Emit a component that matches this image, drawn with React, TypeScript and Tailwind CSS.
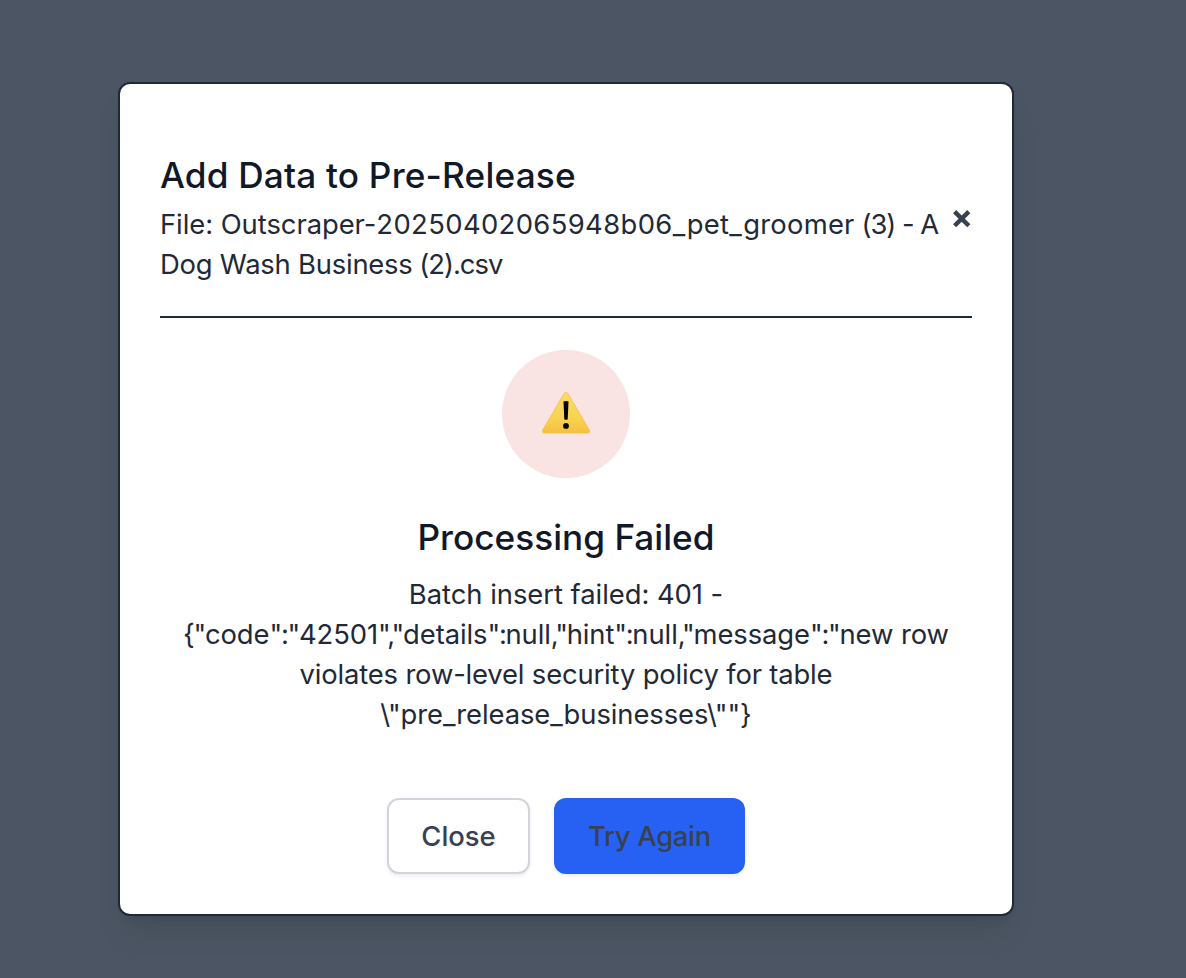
function WarningIcon() {
  return (
    <svg className="mb-[3px]" width="50" height="44" viewBox="0 0 50 44" aria-hidden="true">
      <defs>
        <linearGradient id="warn" x1="0" y1="0" x2="0" y2="1">
          <stop offset="0" stopColor="#fadb62" />
          <stop offset="0.6" stopColor="#f9d453" />
          <stop offset="1" stopColor="#f4c142" />
        </linearGradient>
      </defs>
      <path
        d="M23.4 2.1Q25 -0.2 26.6 2.1L48.4 39.1Q49.6 41.9 46.8 42H3.2Q0.4 41.9 1.6 39.1Z"
        fill="url(#warn)"
        stroke="#f2c14b"
        strokeWidth="0.8"
      />
      <path d="M22.5 10.5Q25 9.6 27.5 10.5L26.7 28.2Q25 29.2 23.3 28.2Z" fill="#000" />
      <circle cx="25" cy="34.9" r="2.9" fill="#000" />
    </svg>
  );
}

// Sets JSON punctuation slightly tighter than the words around it.
function JsonText({ text }: { text: string }) {
  return (
    <>
      {text.split(/([{}":,]+)/).map((part, i) => (
        <span key={i} className={i % 2 === 1 ? "tracking-[-1.3px]" : "tracking-[-0.08px]"}>
          {part}
        </span>
      ))}
    </>
  );
}

export default function App() {
  return (
    <div className="h-[978px] w-[1186px] overflow-hidden bg-[#4c5563] pt-[82px] pl-[118px] font-['Inter','Liberation_Sans',sans-serif]">
      <div className="h-[834px] w-[896px] rounded-xl border-2 border-[#1f2937] bg-white px-10 pt-[63px] pb-10 shadow-[0_20px_30px_-6px_rgba(0,0,0,0.1),0_8px_12px_-8px_rgba(0,0,0,0.1)]">
        <div className="flex items-center justify-between border-b-2 border-[#1f2937] pb-8">
          <div className="whitespace-nowrap">
            <h3 className="mb-px text-[35.2px] leading-[56px] font-medium tracking-[0.18px] text-[#111827]">
              Add Data to Pre-Release
            </h3>
            <p className="text-[27.4px] leading-10 text-[#1f2937]">
              <span className="block">
                <span className="tracking-[-0.05px]">File: Outscraper-</span>
                <span className="tracking-[0.38px]">20250402065948b06</span>
                <span className="tracking-[1.5px]">_</span>
                <span className="tracking-[0.25px]">pet</span>
                <span className="tracking-[1.5px]">_</span>
                <span className="tracking-[0.25px]">groomer</span>
                <span className="tracking-[-1px]"> (3) - A</span>
              </span>
              <span className="block">
                <span className="tracking-[-0.22px]">Dog Wash Business</span>
                <span className="tracking-[-1px]"> (2).csv</span>
              </span>
            </p>
          </div>
          <button className="mt-[7px] shrink-0" aria-label="Dismiss">
            <svg width="20" height="20" viewBox="0 0 20 20" fill="none" stroke="#374151" strokeWidth="4.4">
              <path d="M2.6 2.6L16.8 16.8M16.8 2.6L2.6 16.8" />
            </svg>
          </button>
        </div>
        <div className="flex flex-col items-center pt-8 text-center whitespace-nowrap">
          <div className="flex size-32 items-center justify-center rounded-full bg-[#f9e3e3]">
            <WarningIcon />
          </div>
          <h3 className="mt-[31px] text-[35.2px] leading-[56px] font-medium text-[#111827]">
            Processing Failed
          </h3>
          <p className="mt-[9px] text-[27.4px] leading-10 text-[#1f2937]">
            <span className="block tracking-[-0.04px]">Batch insert failed: 401 -</span>
            <span className="block">
              <JsonText text={'{"code":"42501","details":null,"hint":null,"message":"new row'} />
            </span>
            <span className="block tracking-[-0.16px]">violates row-level security policy for table</span>
            <span className="block tracking-[-0.08px]">{'\\"pre_release_businesses\\""}'}</span>
          </p>
          <div className="mt-16 flex gap-6 text-[27.4px] font-medium text-[#374151]">
            <button className="h-[76px] w-[143px] rounded-xl border-2 border-[#d1d5db] bg-white pt-[2px] shadow-[0_2px_4px_rgba(0,0,0,0.08)]">
              Close
            </button>
            <button className="h-[76px] w-[191px] rounded-xl bg-[#2761f3] pt-[2px] tracking-[-0.3px] shadow-[0_2px_4px_rgba(0,0,0,0.08)]">
              Try Again
            </button>
          </div>
        </div>
      </div>
    </div>
  );
}
